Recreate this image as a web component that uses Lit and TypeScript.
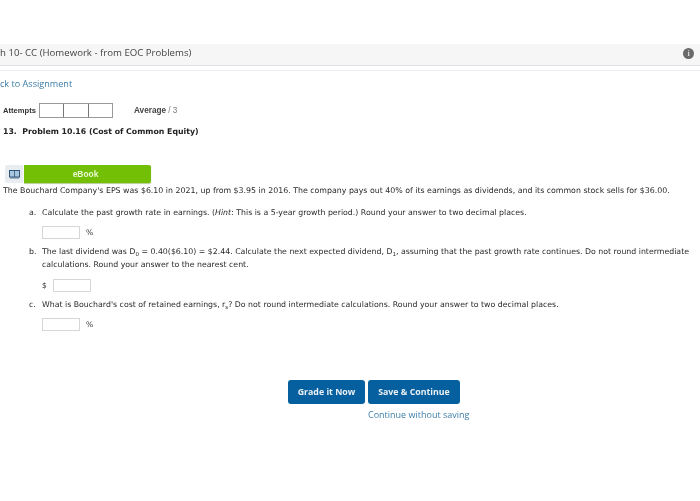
import { LitElement, html, css } from "lit";
import { customElement } from "lit/decorators.js";

@customElement("app-root")
export class AppRoot extends LitElement {
  static styles = css`
    :host { display: block; width: 700px; height: 501px; background: #fff; overflow: hidden; filter: blur(0.35px); color: #333; }
    .page { display: flex; flex-direction: column; padding-top: 44px; }
    .head { height: 21px; box-sizing: content-box; background: #f6f6f7; border-bottom: 1px solid #dfdfe6; display: flex; align-items: center; justify-content: space-between; padding: 0 6px 0 0; font: 9.65px/1 "Open Sans", sans-serif; color: #444; }
    .head > span:first-child { margin-top: -3px; }
    .info { width: 11px; height: 11px; margin-top: -3px; border-radius: 50%; background: #6a6a6a; color: #ddd; font: bold 8px/11px "Liberation Serif", serif; text-align: center; }
    .rule { height: 1px; margin-top: 4px; background: #eeeef5; }
    .back { margin-top: 6px; height: 13px; font: 9.1px/13px "Open Sans", sans-serif; color: #3a7ba5; }
    .attempts { margin-top: 12px; height: 16px; padding-left: 3px; display: flex; align-items: center; font: 7.6px/1 "Liberation Sans", sans-serif; color: #333; }
    .attempts b { width: 36px; margin-top: 2px; font-weight: 700; }
    .boxes { display: flex; width: 74px; height: 15px; border: 1px solid #999; box-sizing: border-box; }
    .boxes i { flex: 1; border-right: 1px solid #777; }
    .boxes i:last-child { border-right: 0; }
    .avg { margin: 2px 0 0 21px; font-size: 8.2px; color: #444; }
    .avg span { font-weight: 700; }
    .avg em { font-style: normal; color: #777; }
    .title { margin: 8px 0 0 3px; height: 12px; font: bold 7.8px/12px "DejaVu Sans", sans-serif; color: #222; }
    .ebook { margin: 27px 0 0 5px; display: flex; height: 18px; width: 146px; }
    .book { width: 18px; background: #e9ecf1; border-radius: 2px 0 0 2px; display: flex; align-items: center; justify-content: center; }
    .bar { margin-left: 1px; flex: 1; padding-right: 4px; background: #72bf06; border-radius: 0 2px 2px 0; box-shadow: 0 1px 1px #b5c99a; color: #e8f7d2; font: bold 8.4px/18px "Liberation Sans", sans-serif; text-align: center; }
    .txt { font: 7.82px/13px "DejaVu Sans", sans-serif; color: #2a2a2a; }
    .intro { margin: 1px 0 0 3px; height: 13px; font-size: 7.85px; white-space: nowrap; }
    .q { margin-top: 9px; margin-left: 29px; display: grid; grid-template-columns: 13px 1fr; width: 662px; }
    .q2 { margin-top: 6px; }
    .q .body { white-space: nowrap; }
    .q sub { font-size: 5.5px; line-height: 0; vertical-align: -1.5px; }
    .ans { margin: 7px 0 0 42px; height: 13px; display: flex; align-items: center; gap: 6px; }
    .a2 { margin-top: 8px; }
    .ans u { display: block; width: 38px; height: 13px; box-sizing: border-box; background: #fff; border: 1px solid #d6d6d6; }
    .ans span { font: 7.6px/13px "DejaVu Sans", sans-serif; color: #333; }
    .actions { margin: 49px 0 0 288px; display: flex; flex-direction: column; }
    .btns { display: flex; gap: 3px; }
    .btn { height: 24px; background: #06609f; border-radius: 3px; color: #e9f0f6; font: 700 8.8px/24px "Open Sans", sans-serif; text-align: center; }
    .grade { width: 77px; }
    .save { width: 92px; }
    .cont { margin: 4px 0 0 80px; font: 9px/14px "Open Sans", sans-serif; color: #3f7fa8; white-space: nowrap; }
  `;

  render() {
    return html`<div class="page">
      <div class="head"><span>h 10- CC (Homework - from EOC Problems)</span><span class="info">i</span></div>
      <div class="rule"></div>
      <div class="back">ck to Assignment</div>
      <div class="attempts"><b>Attempts</b><div class="boxes"><i></i><i></i><i></i></div><div class="avg"><span>Average</span> <em>/ 3</em></div></div>
      <div class="title">13.&nbsp; Problem 10.16 (Cost of Common Equity)</div>
      <div class="ebook">
        <div class="book"><svg width="11" height="9" viewBox="0 0 11 9"><rect x="0.5" y="0.5" width="10" height="6.5" fill="#a9c6e0" stroke="#2f5578"/><path d="M5.5 1v6M1 8h9" stroke="#2f5578" stroke-width="0.8"/></svg></div>
        <div class="bar">eBook</div>
      </div>
      <div class="txt intro">The Bouchard Company's EPS was $6.10 in 2021, up from $3.95 in 2016. The company pays out 40% of its earnings as dividends, and its common stock sells for $36.00.</div>
      <div class="txt q"><span>a.</span><span class="body">Calculate the past growth rate in earnings. (<em>Hint</em>: This is a 5-year growth period.) Round your answer to two decimal places.</span></div>
      <div class="ans"><u></u><span>%</span></div>
      <div class="txt q q2"><span>b.</span><span class="body">The last dividend was D<sub>0</sub> = 0.40($6.10) = $2.44. Calculate the next expected dividend, D<sub>1</sub>, assuming that the past growth rate continues. Do not round intermediate<br>calculations. Round your answer to the nearest cent.</span></div>
      <div class="ans a2"><span>$</span><u></u></div>
      <div class="txt q q2"><span>c.</span><span class="body">What is Bouchard's cost of retained earnings, r<sub>s</sub>? Do not round intermediate calculations. Round your answer to two decimal places.</span></div>
      <div class="ans"><u></u><span>%</span></div>
      <div class="actions">
        <div class="btns"><div class="btn grade">Grade it Now</div><div class="btn save">Save &amp; Continue</div></div>
        <div class="cont">Continue without saving</div>
      </div>
    </div>`;
  }
}
